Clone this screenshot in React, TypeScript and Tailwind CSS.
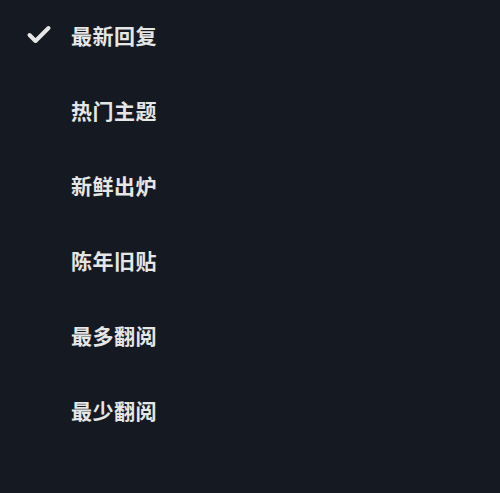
const items = ["最新回复", "热门主题", "新鲜出炉", "陈年旧贴", "最多翻阅", "最少翻阅"]

function CheckMark() {
  return (
    <svg width="26" height="20" viewBox="0 0 26 20" className="mb-[6px] ml-[26px]">
      <polyline
        points="3.5,10 9.5,16 22.5,3"
        fill="none"
        stroke="currentColor"
        strokeWidth="4"
        strokeLinecap="round"
        strokeLinejoin="round"
      />
    </svg>
  )
}

export default function App() {
  return (
    <div
      className="min-h-[493px] bg-[#151921] text-[#e6e6e6]"
      style={{ fontFamily: '"Noto Sans CJK SC", "Noto Sans", sans-serif' }}
    >
      <ul className="flex flex-col">
        {items.map((item, i) => (
          <li key={item} className="flex h-[75px] items-center">
            <div className="flex w-[71px]">{i === 0 && <CheckMark />}</div>
            <span className="mb-[4px] text-[21px] font-bold tracking-[0.5px]">{item}</span>
          </li>
        ))}
      </ul>
    </div>
  )
}
